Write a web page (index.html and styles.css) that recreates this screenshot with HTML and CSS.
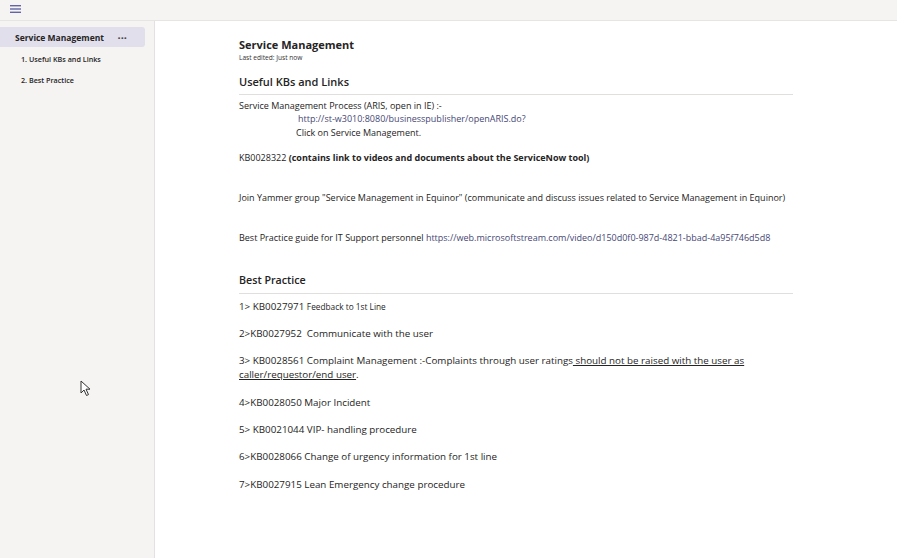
FILE: index.html
```html
<!DOCTYPE html>
<html>
<head>
<meta charset="utf-8">
<link rel="stylesheet" href="styles.css">
</head>
<body>
<div class="app">
  <header class="topbar">
    <svg class="hamburger" width="11" height="8" viewBox="0 0 11 8"><rect x="0" y="0" width="11" height="1.4" fill="#6264a7"/><rect x="0" y="3.3" width="11" height="1.4" fill="#6264a7"/><rect x="0" y="6.6" width="11" height="1.4" fill="#6264a7"/></svg>
  </header>
  <div class="main">
    <nav class="sidebar">
      <div class="page-item active"><span>Service Management</span><span class="dots">···</span></div>
      <div class="sub-item">1. Useful KBs and Links</div>
      <div class="sub-item">2. Best Practice</div>
    </nav>
    <section class="content">
      <div class="page">
        <h1 class="title">Service Management</h1>
        <div class="edited">Last edited: Just now</div>
        <h2 class="section">Useful KBs and Links</h2>
        <div class="block">
          <p>Service Management Process (ARIS, open in IE) :-</p>
          <p class="indent-link"><span class="link">http://st-w3010:8080/businesspublisher/openARIS.do?</span></p>
          <p class="indent">Click on Service Management.</p>
        </div>
        <p class="gap2">KB0028322 <b>(contains link to videos and documents about the ServiceNow tool)</b></p>
        <p class="gap3">Join Yammer group "Service Management in Equinor" (communicate and discuss issues related to Service Management in Equinor)</p>
        <p class="gap3">Best Practice guide for IT Support personnel <span class="link">https://web.microsoftstream.com/video/d150d0f0-987d-4821-bbad-4a95f746d5d8</span></p>
        <h2 class="section bp">Best Practice</h2>
        <div class="list">
          <p>1&gt; KB0027971 <span class="small">Feedback to 1st Line</span></p>
          <p>2&gt;KB0027952&nbsp; Communicate with the user</p>
          <p>3&gt; KB0028561 Complaint Management :-Complaints through user ratings<span class="ul"> should not be raised with the user as</span> <span class="ul">caller/requestor/end user</span>.</p>
          <p>4&gt;KB0028050 Major Incident</p>
          <p>5&gt; KB0021044 VIP- handling procedure</p>
          <p>6&gt;KB0028066 Change of urgency information for 1st line</p>
          <p>7&gt;KB0027915 Lean Emergency change procedure</p>
        </div>
      </div>
    </section>
  </div>
  <svg class="cursor" width="12" height="17" viewBox="0 0 12 17"><path d="M1 1 L1 13 L4 10 L6.5 15.5 L8.5 14.6 L6 9.2 L10 9.2 Z" fill="#fff" stroke="#333" stroke-width="1" stroke-linejoin="round"/></svg>
</div>
</body>
</html>
```

FILE: styles.css
```css
* { box-sizing: border-box; }
html, body { margin: 0; padding: 0; }
body {
  font-family: "Open Sans", "Noto Sans", sans-serif;
  color: #252424;
  background: #fff;
  width: 897px;
  height: 558px;
  overflow: hidden;
}
.app { position: relative; width: 897px; height: 558px; display: flex; flex-direction: column; }
.topbar {
  height: 21px;
  flex: none;
  background: #f5f4f2;
  border-bottom: 1px solid #e6e5e3;
  display: flex;
  align-items: center;
  padding-left: 10px;
}
.hamburger { margin-top: -3px; }
.main { flex: 1; display: flex; min-height: 0; }
.sidebar {
  width: 155px;
  flex: none;
  background: #f5f4f2;
  border-right: 1px solid #e3e2e0;
  padding-top: 6px;
}
.page-item {
  width: 145px;
  height: 20px;
  display: flex;
  align-items: center;
  justify-content: space-between;
  padding: 0 18px 0 15px;
  font-size: 8.5px;
  font-weight: 700;
  color: #252424;
  border-radius: 0 3px 3px 0;
}
.page-item.active { background: #e1dfeb; }
.dots { font-size: 11px; font-weight: 700; color: #444; }
.sub-item {
  font-size: 7.2px;
  font-weight: 600;
  color: #252424;
  padding-left: 21px;
  height: 21px;
  line-height: 21px;
}
.page-item + .sub-item { margin-top: 2px; }
.content { flex: 1; background: #fff; padding-left: 84px; padding-top: 16px; }
.page { width: 554px; }
.title { font-size: 11px; font-weight: 700; margin: 0; line-height: 16px; }
.edited { font-size: 6.6px; line-height: 9px; color: #333; }
.section {
  font-size: 11px;
  font-weight: 600;
  margin: 11px 0 0;
  line-height: 17px;
  padding-bottom: 4px;
  border-bottom: 1px solid #e1dfdd;
}
.section.bp { font-size: 10.7px; margin-top: 27px; }
p { margin: 0; font-size: 9px; line-height: 13.3px; color: #252424; }
.block { margin-top: 4px; }
.indent-link { padding-left: 59px; }
.indent { padding-left: 57px; }
.link { color: #464775; }
.gap2 { margin-top: 12px; }
.gap3 { margin-top: 27px; }
.list { margin-top: 6px; }
.list p { font-size: 9.8px; line-height: 14px; margin-bottom: 13.3px; }
.list .small { font-size: 8.3px; }
.ul { text-decoration: underline; }
.cursor { position: absolute; left: 80px; top: 380px; }
```
